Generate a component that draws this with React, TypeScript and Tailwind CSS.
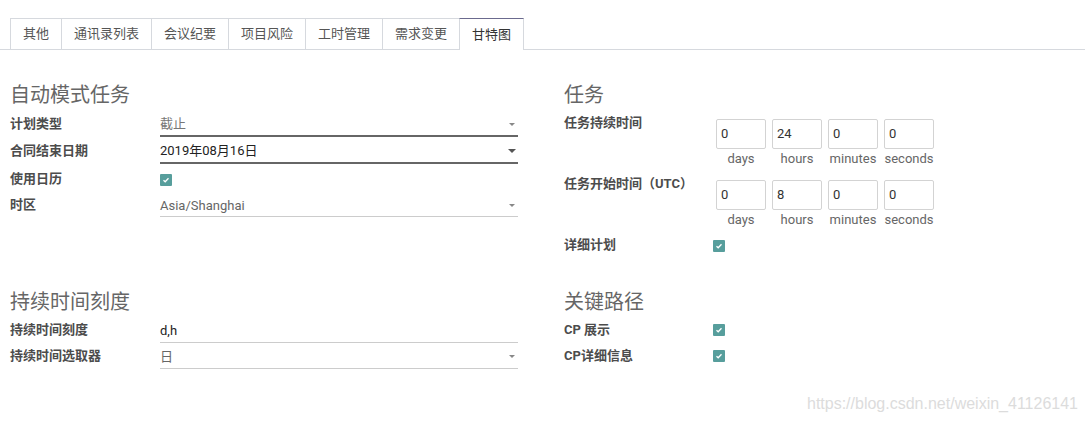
const tabs = ["其他", "通讯录列表", "会议纪要", "项目风险", "工时管理", "需求变更", "甘特图"];

function Check() {
  return (
    <span className="flex h-[12px] w-[12px] items-center justify-center rounded-[1px] bg-[#579e9c]">
      <svg width="8" height="8" viewBox="0 0 8 8">
        <path d="M1.5 4.2 L3.2 5.8 L6.5 2.3" fill="none" stroke="white" strokeWidth="1.3" />
      </svg>
    </span>
  );
}

function Caret({dark}: {dark?: boolean}) {
  return dark ? (
    <span className="mr-[2px] h-0 w-0 border-x-[4px] border-t-[4px] border-x-transparent border-t-[#555]" />
  ) : (
    <span className="mr-[3px] h-0 w-0 border-x-[3px] border-t-[3px] border-x-transparent border-t-[#888]" />
  );
}

function Label({children}: {children: React.ReactNode}) {
  return <div className="w-[150px] shrink-0 text-[13px] font-bold text-[#4c4c4c]">{children}</div>;
}

function Heading({children}: {children: React.ReactNode}) {
  return <div className="h-[26px] text-[20px] leading-[26px] text-[#666]">{children}</div>;
}

function TimeBoxes({values}: {values: string[]}) {
  const units = ["days", "hours", "minutes", "seconds"];
  return (
    <div className="ml-[3px] mt-[9px] flex gap-[6px]">
      {values.map((v, i) => (
        <div key={i} className="flex w-[50px] flex-col items-center">
          <div className="flex h-[30px] w-[50px] items-center rounded-[2px] border border-[#d3d3d3] pl-[4px] text-[13px] text-[#333]">
            {v}
          </div>
          <div className="h-[19px] whitespace-nowrap pt-[1px] text-[13px] leading-[18px] text-[#666]">{units[i]}</div>
        </div>
      ))}
    </div>
  );
}

export default function App() {
  return (
    <div
      className="relative h-[423px] w-[1085px] overflow-hidden bg-white pt-[18px]"
      style={{fontFamily: 'Roboto, "Noto Sans CJK SC", sans-serif'}}
    >
      {/* tabs */}
      <div className="flex border-b border-[#d6d9de] pl-[10px]">
        {tabs.map((t, i) => {
          const active = i === tabs.length - 1;
          return (
            <div
              key={t}
              className={
                active
                  ? "-mb-px flex h-[32px] items-center border-x border-t border-x-[#d6d9de] border-t-[#6b6a8e] bg-white px-[12px] text-[13px] text-[#333]"
                  : "flex h-[31px] items-center border-l border-t border-[#d6d9de] px-[12px] text-[13px] text-[#555]"
              }
            >
              {t}
            </div>
          );
        })}
      </div>

      <div className="px-[10px]">
        {/* group 1 */}
        <div className="mt-[32px] flex">
          <div className="w-[554px] shrink-0">
            <Heading>自动模式任务</Heading>
            <div className="mt-[2px]">
              <div className="flex h-[27px] items-end">
                <div className="self-center"><Label>计划类型</Label></div>
                <div className="flex h-[24px] w-[358px] items-center justify-between border-b-2 border-[#666] text-[13px] text-[#777]">
                  <span>截止</span>
                  <Caret />
                </div>
              </div>
              <div className="flex h-[27px] items-end">
                <div className="self-center"><Label>合同结束日期</Label></div>
                <div className="flex h-[24px] w-[358px] items-center justify-between border-b-2 border-[#666] text-[13px] text-[#222]">
                  <span>2019年08月16日</span>
                  <Caret dark />
                </div>
              </div>
              <div className="mt-[2px] flex h-[26px] items-center">
                <Label>使用日历</Label>
                <div className="mt-[2px]"><Check /></div>
              </div>
              <div className="flex h-[25px] items-end">
                <div className="self-center"><Label>时区</Label></div>
                <div className="flex h-[22px] w-[358px] items-center justify-between border-b border-[#ccc] text-[13px] text-[#666]">
                  <span>Asia/Shanghai</span>
                  <Caret />
                </div>
              </div>
            </div>
          </div>

          <div className="flex-1">
            <Heading>任务</Heading>
            <div className="mt-[2px] flex">
              <div className="w-[149px] shrink-0 text-[13px] font-bold leading-[26px] text-[#4c4c4c]">任务持续时间</div>
              <TimeBoxes values={["0", "24", "0", "0"]} />
            </div>
            <div className="mt-[3px] flex">
              <div className="w-[149px] shrink-0 text-[13px] font-bold leading-[26px] text-[#4c4c4c]">任务开始时间（UTC）</div>
              <TimeBoxes values={["0", "8", "0", "0"]} />
            </div>
            <div className="mt-[3px] flex h-[26px] items-center">
              <div className="w-[149px] shrink-0 text-[13px] font-bold text-[#4c4c4c]">详细计划</div>
              <div className="mt-[2px]"><Check /></div>
            </div>
          </div>
        </div>

        {/* group 2 */}
        <div className="mt-[31px] flex">
          <div className="w-[554px] shrink-0">
            <Heading>持续时间刻度</Heading>
            <div className="mt-[2px]">
              <div className="flex h-[26px] items-end">
                <div className="self-center"><Label>持续时间刻度</Label></div>
                <div className="flex h-[24px] w-[358px] items-center border-b border-[#ccc] text-[13px] text-[#222]">
                  d,h
                </div>
              </div>
              <div className="flex h-[26px] items-end">
                <div className="self-center"><Label>持续时间选取器</Label></div>
                <div className="flex h-[24px] w-[358px] items-center justify-between border-b border-[#ccc] text-[13px] text-[#666]">
                  <span>日</span>
                  <Caret />
                </div>
              </div>
            </div>
          </div>

          <div className="flex-1">
            <Heading>关键路径</Heading>
            <div className="mt-[2px]">
              <div className="flex h-[26px] items-center">
                <div className="w-[149px] shrink-0 text-[13px] font-bold text-[#4c4c4c]">CP 展示</div>
                <Check />
              </div>
              <div className="flex h-[26px] items-center">
                <div className="w-[149px] shrink-0 text-[13px] font-bold text-[#4c4c4c]">CP详细信息</div>
                <Check />
              </div>
            </div>
          </div>
        </div>
      </div>

      <div className="absolute bottom-[7px] right-[7px] font-['Liberation_Sans',sans-serif] text-[16px] text-[#dcdcdc]">
        https://blog.csdn.net/weixin_41126141
      </div>
    </div>
  );
}
